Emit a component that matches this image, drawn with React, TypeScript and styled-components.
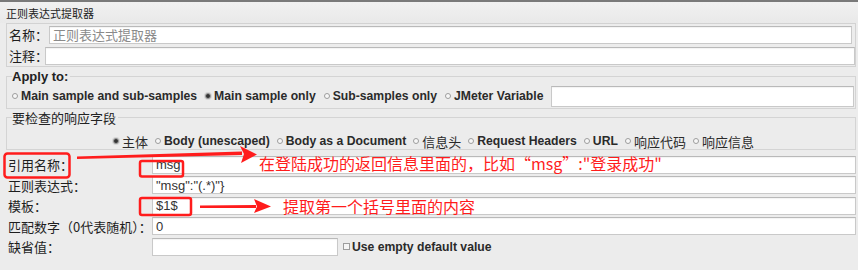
import React from 'react';
import styled, { createGlobalStyle } from 'styled-components';

const GlobalStyle = createGlobalStyle`
  html, body {
    margin: 0;
    padding: 0;
    background: #ececec;
  }
  body {
    font-family: "Liberation Sans", "Noto Sans CJK SC", sans-serif;
    color: #222;
  }
`;

const Page = styled.div`
  position: relative;
  width: 858px;
  height: 270px;
  overflow: hidden;
  background: #ececec;
  border-top: 2px solid #7a7a7a;
  box-sizing: border-box;
`;

const Header = styled.div`
  height: 21px;
  display: flex;
  align-items: center;
  padding-left: 6px;
  font-family: "Noto Sans CJK SC", sans-serif;
  font-size: 11px;
  color: #222;
  background: linear-gradient(#f1f1f1, #e9e9e9);
`;

const NameBox = styled.div`
  margin: 0 2px 0 6px;
  border: 1px solid #d2d2d2;
  display: flex;
  flex-direction: column;
  gap: 2px;
  padding: 1px 0 1px 0;
`;

const NameRow = styled.div`
  display: flex;
  align-items: center;
  height: 19px;
`;

const Label = styled.span<{ $w?: number }>`
  font-family: "Noto Sans CJK SC", serif;
  font-size: 13px;
  color: #1e1e1e;
  white-space: nowrap;
  ${(p) => (p.$w ? `width: ${p.$w}px; flex: none;` : '')}
  padding-left: 2px;
`;

const Field = styled.div<{ $muted?: boolean; $w?: number }>`
  height: 18px;
  box-sizing: border-box;
  background: #fff;
  border: 1px solid #c9c9c9;
  border-top-color: #b9b9b9;
  box-shadow: inset 0 1px 1px rgba(0, 0, 0, 0.05);
  display: flex;
  align-items: center;
  padding-left: 3px;
  font-family: "Liberation Sans", "Noto Sans CJK SC", sans-serif;
  font-size: 13px;
  color: ${(p) => (p.$muted ? '#8a8a8a' : '#333')};
  ${(p) => (p.$w ? `width: ${p.$w}px; flex: none;` : 'flex: 1;')}
`;

const CjkValue = styled.span`
  font-family: "Noto Sans CJK SC", serif;
  font-size: 13px;
`;

const Fieldset = styled.fieldset<{ $top: number; $h: number }>`
  margin: ${(p) => p.$top}px 2px 0 6px;
  padding: 0 0 0 5px;
  height: ${(p) => p.$h}px;
  box-sizing: border-box;
  border: 1px solid #d4d4d4;
  min-width: 0;
`;

const Legend = styled.legend<{ $cjk?: boolean }>`
  padding: 0 2px 0 0;
  font-family: ${(p) => (p.$cjk ? '"Noto Sans CJK SC", serif' : '"Liberation Sans", sans-serif')};
  font-weight: ${(p) => (p.$cjk ? 400 : 700)};
  font-size: 13px;
  line-height: 15px;
  color: #222;
`;

const RadioRow = styled.div<{ $center?: boolean }>`
  display: flex;
  align-items: center;
  gap: ${(p) => (p.$center ? 7 : 8)}px;
  height: 22px;
  ${(p) => (p.$center ? 'justify-content: center; margin-top: 5px;' : 'margin-top: 1px;')}
`;

const Option = styled.label`
  display: flex;
  align-items: center;
  gap: 3px;
  white-space: nowrap;
`;

const RadioDot = styled.span<{ $checked?: boolean }>`
  width: 6px;
  height: 6px;
  border-radius: 50%;
  box-sizing: border-box;
  border: 1px solid #9d9d9d;
  background: ${(p) => (p.$checked ? '#333' : '#f7f7f7')};
  box-shadow: ${(p) => (p.$checked ? '0 0 0 1px #d6d6d6' : 'none')};
`;

const OptText = styled.span<{ $cjk?: boolean }>`
  font-family: ${(p) => (p.$cjk ? '"Noto Sans CJK SC", serif' : '"Liberation Sans", sans-serif')};
  font-weight: ${(p) => (p.$cjk ? 400 : 700)};
  font-size: ${(p) => (p.$cjk ? 13 : 12.2)}px;
  color: #2a2a2a;
`;

const VarField = styled(Field)`
  height: 21px;
  margin-left: 0;
  margin-right: 1px;
`;

const Form = styled.div`
  margin: 5px 2px 0 6px;
  display: grid;
  grid-template-columns: 146px 1fr;
  row-gap: 1.5px;
  align-items: center;
`;

const Inline = styled.div`
  display: flex;
  align-items: center;
  gap: 5px;
`;

const CheckBox = styled.span`
  width: 7px;
  height: 7px;
  box-sizing: border-box;
  border: 1px solid #9d9d9d;
  background: #f5f5f5;
`;

const Overlay = styled.svg`
  position: absolute;
  left: 0;
  top: -2px;
  pointer-events: none;
`;

const Note = styled.div<{ $x: number; $y: number }>`
  position: absolute;
  left: ${(p) => p.$x}px;
  top: ${(p) => p.$y}px;
  font-family: "Noto Sans CJK SC", sans-serif;
  font-size: 16px;
  line-height: 18px;
  color: #ff1c1c;
  white-space: nowrap;
`;

const respOptions = [
  { t: '主体', cjk: true, on: true },
  { t: 'Body (unescaped)' },
  { t: 'Body as a Document' },
  { t: '信息头', cjk: true },
  { t: 'Request Headers' },
  { t: 'URL' },
  { t: '响应代码', cjk: true },
  { t: '响应信息', cjk: true },
];

const applyOptions = [
  { t: 'Main sample and sub-samples' },
  { t: 'Main sample only', on: true },
  { t: 'Sub-samples only' },
  { t: 'JMeter Variable' },
];

export default function App() {
  return (
    <>
      <GlobalStyle />
      <Page>
        <Header>正则表达式提取器</Header>
        <NameBox>
          <NameRow>
            <Label $w={40}>名称：</Label>
            <Field $muted>
              <CjkValue>正则表达式提取器</CjkValue>
            </Field>
            <span style={{ width: 3 }} />
          </NameRow>
          <NameRow>
            <Label $w={36}>注释：</Label>
            <Field />
          </NameRow>
        </NameBox>

        <Fieldset $top={2} $h={40}>
          <Legend>Apply to:</Legend>
          <RadioRow>
            {applyOptions.map((o) => (
              <Option key={o.t}>
                <RadioDot $checked={o.on} />
                <OptText>{o.t}</OptText>
              </Option>
            ))}
            <VarField />
          </RadioRow>
        </Fieldset>

        <Fieldset $top={1} $h={40}>
          <Legend $cjk>要检查的响应字段</Legend>
          <RadioRow $center>
            {respOptions.map((o) => (
              <Option key={o.t}>
                <RadioDot $checked={o.on} />
                <OptText $cjk={o.cjk}>{o.t}</OptText>
              </Option>
            ))}
          </RadioRow>
        </Fieldset>

        <Form>
          <Label>引用名称：</Label>
          <Field>msg</Field>
          <Label>正则表达式：</Label>
          <Field>{'"msg":"(.*)"}'}</Field>
          <Label>模板：</Label>
          <Field>$1$</Field>
          <Label>匹配数字（0代表随机）：</Label>
          <Field>0</Field>
          <Label>缺省值：</Label>
          <Inline>
            <Field $w={186} />
            <CheckBox />
            <OptText style={{ marginLeft: -3 }}>Use empty default value</OptText>
          </Inline>
        </Form>

        <Overlay width="858" height="270" viewBox="0 0 858 270">
          <g fill="none" stroke="#ff1c1c" strokeWidth="2.5">
            <rect x="4.5" y="153.5" width="65" height="24" rx="3" />
            <rect x="140" y="161" width="43" height="15.5" rx="2" />
            <rect x="140" y="198" width="51" height="17" rx="2" />
          </g>
          <g fill="#ff1c1c">
            <polygon points="77,156.5 242,151.5 242,155 77,159" />
            <polygon points="240,146 257,154.5 241,163 244,154" />
            <polygon points="200,205.5 256,205 256,208 200,208" />
            <polygon points="254,199 271,206.5 254,213 257,206.5" />
          </g>
        </Overlay>
        <Note $x={259} $y={152}>在登陆成功的返回信息里面的，比如“msg”:"登录成功"</Note>
        <Note $x={283} $y={195}>提取第一个括号里面的内容</Note>
      </Page>
    </>
  );
}
